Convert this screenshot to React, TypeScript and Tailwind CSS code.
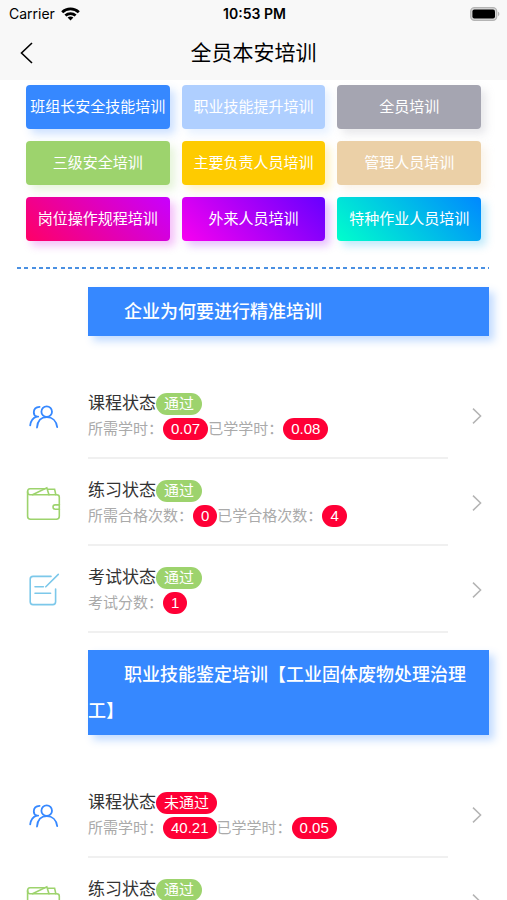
import type { ReactNode } from "react"

type IconName = "course" | "practice" | "exam"

interface Stat {
  label: string
  value: string
}

interface StatusRow {
  icon: IconName
  title: string
  passed: boolean
  stats: Stat[]
}

interface Training {
  title: string
  rows: StatusRow[]
}

const categories = [
  { name: "班组长安全技能培训", style: "bg-[#3688ff] shadow-[5px_5px_8px_rgba(54,136,255,0.25)]" },
  { name: "职业技能提升培训", style: "bg-[#afcfff] shadow-[5px_5px_8px_rgba(175,207,255,0.3)]" },
  { name: "全员培训", style: "bg-[#a5a5b1] shadow-[5px_5px_8px_rgba(165,165,177,0.25)]" },
  { name: "三级安全培训", style: "bg-[#9dd36d] shadow-[5px_5px_8px_rgba(157,211,109,0.25)]" },
  { name: "主要负责人员培训", style: "bg-[#fecb00] shadow-[5px_5px_8px_rgba(254,203,0,0.25)]" },
  { name: "管理人员培训", style: "bg-[#ebd0a7] shadow-[5px_5px_8px_rgba(235,208,167,0.25)]" },
  {
    name: "岗位操作规程培训",
    style: "bg-[linear-gradient(45deg,#ff0066,#c800ff)] shadow-[5px_5px_8px_rgba(210,0,230,0.25)]",
  },
  {
    name: "外来人员培训",
    style: "bg-[linear-gradient(45deg,#f800f0,#6600ff)] shadow-[5px_5px_8px_rgba(160,0,250,0.25)]",
  },
  {
    name: "特种作业人员培训",
    style: "bg-[linear-gradient(45deg,#00ffcc,#0088ff)] shadow-[5px_5px_8px_rgba(0,170,240,0.25)]",
  },
]

const trainings: Training[] = [
  {
    title: "企业为何要进行精准培训",
    rows: [
      {
        icon: "course",
        title: "课程状态",
        passed: true,
        stats: [
          { label: "所需学时：", value: "0.07" },
          { label: "已学学时：", value: "0.08" },
        ],
      },
      {
        icon: "practice",
        title: "练习状态",
        passed: true,
        stats: [
          { label: "所需合格次数：", value: "0" },
          { label: "已学合格次数：", value: "4" },
        ],
      },
      { icon: "exam", title: "考试状态", passed: true, stats: [{ label: "考试分数：", value: "1" }] },
    ],
  },
  {
    title: "职业技能鉴定培训【工业固体废物处理治理工】",
    rows: [
      {
        icon: "course",
        title: "课程状态",
        passed: false,
        stats: [
          { label: "所需学时：", value: "40.21" },
          { label: "已学学时：", value: "0.05" },
        ],
      },
      { icon: "practice", title: "练习状态", passed: true, stats: [] },
    ],
  },
]

const iconPaths: Record<IconName, ReactNode> = {
  course: (
    <g stroke="#3688ff" strokeWidth="1.8">
      <circle cx="21.7" cy="13.7" r="5.3" />
      <path d="M12 29.5C12.6 23 16.3 19.2 21.8 19.2S31.4 23 32.2 29.2" />
      <path d="M14.6 8.8C10.8 9 8.8 11.4 8.8 14.2C8.8 16.4 9.8 18 11.8 18.6L13.2 18.6" />
      <path d="M11.4 18.6C7.8 20 5.6 23.4 5.2 27.4" />
    </g>
  ),
  practice: (
    <g stroke="#9dd36d" strokeWidth="1.6">
      <path d="M34.3 19.9V12.2Q34.3 9.7 31.8 9.7H5Q2.6 9.7 2.6 6.7T5 3.7H20" />
      <path d="M2.6 6.7V31.2Q2.6 34.2 5.6 34.2H31.3Q34.3 34.2 34.3 31.2V24.3" />
      <path d="M34.3 19.9H30.2A2.2 2.2 0 0 0 30.2 24.3H34.3Z" />
      <path d="M7.5 9.7L21.8 2.8L24 9.7M22.2 4.2H29.6L30.8 9.7" />
    </g>
  ),
  exam: (
    <g stroke="#7cc8ea" strokeWidth="1.6">
      <path d="M26 4.4H8Q5.2 4.4 5.2 7.2V29.8Q5.2 32.6 8 32.6H27.8Q30.6 32.6 30.6 29.8V17" />
      <path d="M33.3 2.4L20.8 14.8M10 14.8H18.4M10 21.2H25.6" />
    </g>
  ),
}

function StatusBar() {
  return (
    <div className="grid h-7 grid-cols-3 items-center pl-[9px] pr-[7px] font-['Inter',sans-serif] text-sm text-black">
      <div className="flex items-center gap-[6px]">
        <span>Carrier</span>
        <svg width="19" height="14" viewBox="0 0 19 14" fill="none" stroke="#000" strokeWidth="2.8" aria-hidden="true">
          <path d="M1.2 5.2C5.8 0.7 13.2 0.7 17.8 5.2" />
          <path d="M4.4 8.6C7.3 5.9 11.7 5.9 14.6 8.6" />
          <path d="M9.5 13.6L6.6 10.6C8.4 9.1 10.6 9.1 12.4 10.6Z" fill="#000" stroke="none" />
        </svg>
      </div>
      <span className="text-center font-semibold">10:53 PM</span>
      <svg
        className="justify-self-end"
        width="30"
        height="14"
        viewBox="0 0 30 14"
        role="img"
        aria-label="Battery"
      >
        <rect x="0.7" y="0.7" width="26" height="12.6" rx="3.8" fill="#d8d8d8" stroke="#b4b4b4" strokeWidth="1.3" />
        <rect x="2.4" y="2.4" width="22.6" height="9.2" rx="2" fill="#000" />
        <path d="M28 4.8C29.8 5.4 29.8 8.6 28 9.2Z" fill="#b4b4b4" />
      </svg>
    </div>
  )
}

function Header() {
  return (
    <header className="shrink-0 bg-[#f8f8f8]">
      <StatusBar />
      <div className="grid h-[52px] grid-cols-[1fr_auto_1fr] items-center pb-[2px]">
        <button type="button" className="flex h-10 w-12 items-center pl-5" aria-label="返回">
          <svg width="13" height="22" viewBox="0 0 13 22" fill="none" stroke="#000" strokeWidth="1.6">
            <path d="M12 1L1.5 11L12 21" />
          </svg>
        </button>
        <h1 className="text-[21px] leading-7 text-black">全员本安培训</h1>
      </div>
    </header>
  )
}

function Badge({ green, children }: { green?: boolean; children: ReactNode }) {
  return (
    <span
      className={`h-[22px] rounded-full px-2 text-[15px] leading-[22px] text-white ${
        green ? "bg-[#9dd36d]" : "bg-[#ff0036]"
      }`}
    >
      {children}
    </span>
  )
}

function Row({ row }: { row: StatusRow }) {
  return (
    <a href="#" className="flex h-[87px] items-center">
      <span className="flex w-[88px] shrink-0 pl-[25px]">
        <svg width="36" height="36" viewBox="0 0 36 36" fill="none" strokeLinecap="round" aria-hidden="true">
          {iconPaths[row.icon]}
        </svg>
      </span>
      <span className="flex h-full flex-1 flex-col gap-[2px] border-b-2 border-[#f0f0f0] pt-5">
        <span className="flex items-center text-[17px] leading-6 text-[#333333]">
          {row.title}
          <Badge green={row.passed}>{row.passed ? "通过" : "未通过"}</Badge>
        </span>
        <span className="flex items-center text-[15px] leading-[22px] text-[#aaaaaa]">
          {row.stats.map((stat) => (
            <span key={stat.label} className="flex whitespace-nowrap">
              {stat.label}
              <Badge>{stat.value}</Badge>
            </span>
          ))}
        </span>
      </span>
      <span className="flex w-[59px] shrink-0 pl-6">
        <svg width="10" height="16" viewBox="0 0 10 16" fill="none" stroke="#b4b4b4" strokeWidth="1.5" aria-hidden="true">
          <path d="M1 0.6L8.6 8L1 15.4" />
        </svg>
      </span>
    </a>
  )
}

export default function App() {
  return (
    <div className="flex h-screen flex-col bg-white font-['Liberation_Sans','Noto_Sans_CJK_SC',sans-serif]">
      <Header />

      <main className="flex-1 overflow-y-auto [scrollbar-width:none]">
        {/* Training categories */}
        <div className="grid grid-cols-3 gap-3 px-[26px] pt-[5px]">
          {categories.map((category) => (
            <button
              key={category.name}
              type="button"
              className={`h-11 whitespace-nowrap rounded pt-px text-center text-[15px] text-white ${category.style}`}
            >
              {category.name}
            </button>
          ))}
        </div>

        <div className="mb-px ml-[17px] mr-[18px] mt-[26px] h-[2px] bg-[repeating-linear-gradient(90deg,#4a90e2_0_4px,transparent_4px_7px,#4a90e2_7px_11px,transparent_11px_15px,#4a90e2_15px_19px,transparent_19px_22px,#4a90e2_22px_26px,transparent_26px_29px)]" />

        {/* Training list */}
        {trainings.map((training) => (
          <section key={training.title} className="pt-[17px]">
            <h2 className="mb-9 ml-[88px] mr-[18px] bg-[#3688ff] pb-[6px] pt-[7px] indent-9 text-lg font-medium leading-9 text-white shadow-[5px_5px_8px_rgba(54,136,255,0.3)]">
              {training.title}
            </h2>
            {training.rows.map((row) => (
              <Row key={row.title} row={row} />
            ))}
          </section>
        ))}
      </main>
    </div>
  )
}
